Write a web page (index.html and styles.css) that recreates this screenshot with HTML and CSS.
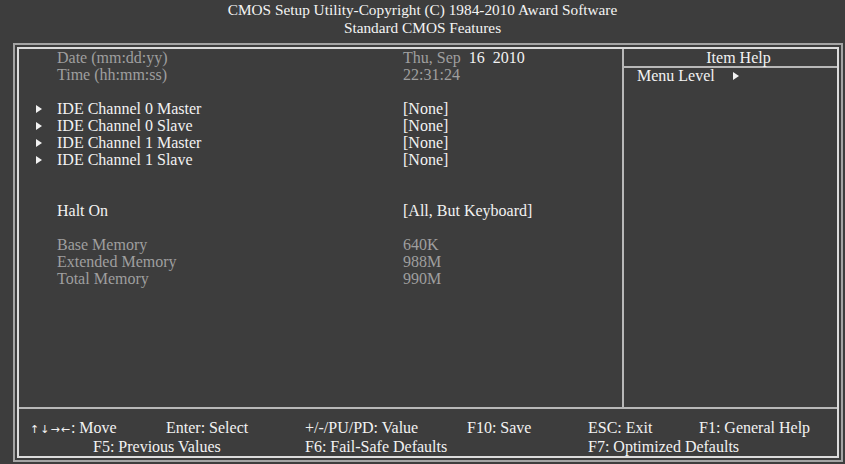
FILE: index.html
```html
<!DOCTYPE html>
<html lang="en">
<head>
  <meta charset="UTF-8">
  <meta name="viewport" content="width=device-width, initial-scale=1.0">
  <title>Standard CMOS Features</title>
  <link rel="stylesheet" href="styles.css">
</head>
<body>
  <!-- 상단 타이틀 -->
  <header class="title">
    <div>CMOS Setup Utility-Copyright (C) 1984-2010 Award Software</div>
    <div>Standard CMOS Features</div>
  </header>

  <div class="frame">
    <div class="inner">
      <div class="main">
        <!-- 설정 항목 목록 -->
        <div class="list">
          <div class="row dim"><span class="mark"></span><span>Date (mm:dd:yy)</span><span class="val">Thu, Sep  <b class="hi">16  2010</b></span></div>
          <div class="row dim"><span class="mark"></span><span>Time (hh:mm:ss)</span><span class="val">22:31:24</span></div>
          <div class="row"></div>
          <div class="row"><span class="mark"><i class="arrow"></i></span><span>IDE Channel 0 Master</span><span class="val">[None]</span></div>
          <div class="row"><span class="mark"><i class="arrow"></i></span><span>IDE Channel 0 Slave</span><span class="val">[None]</span></div>
          <div class="row"><span class="mark"><i class="arrow"></i></span><span>IDE Channel 1 Master</span><span class="val">[None]</span></div>
          <div class="row"><span class="mark"><i class="arrow"></i></span><span>IDE Channel 1 Slave</span><span class="val">[None]</span></div>
          <div class="row"></div>
          <div class="row"></div>
          <div class="row"><span class="mark"></span><span>Halt On</span><span class="val">[All, But Keyboard]</span></div>
          <div class="row"></div>
          <div class="row dim"><span class="mark"></span><span>Base Memory</span><span class="val">640K</span></div>
          <div class="row dim"><span class="mark"></span><span>Extended Memory</span><span class="val">988M</span></div>
          <div class="row dim"><span class="mark"></span><span>Total Memory</span><span class="val">990M</span></div>
        </div>

        <!-- 도움말 영역 -->
        <div class="help">
          <div class="help-title">Item Help</div>
          <div class="help-body">Menu Level <i class="arrow"></i></div>
        </div>
      </div>

      <!-- 하단 키 안내 -->
      <div class="keys">
        <div class="keys-row first">
          <span><span class="keys-arrows">&uarr;&darr;&rarr;&larr;</span>: Move</span>
          <span>Enter: Select</span>
          <span>+/-/PU/PD: Value</span>
          <span>F10: Save</span>
          <span>ESC: Exit</span>
          <span>F1: General Help</span>
        </div>
        <div class="keys-row second">
          <span>F5: Previous Values</span>
          <span>F6: Fail-Safe Defaults</span>
          <span>F7: Optimized Defaults</span>
        </div>
      </div>
    </div>
  </div>
</body>
</html>
```

FILE: styles.css
```css
/* 전체 바디 */
body {
  margin: 0;
  width: 845px;
  height: 464px;
  overflow: hidden;
  background-color: #3d3d3d;
  color: #f2f2f2;
  font-family: 'Liberation Serif', 'Times New Roman', serif;
  font-size: 16px;
}

.title {
  height: 43px;
  padding-top: 1px;
  box-sizing: border-box;
  text-align: center;
  font-size: 15.3px;
  line-height: 18px;
  color: #f4f4f4;
}

/* 바깥 회색 테두리 + 안쪽 흰 테두리 */
.frame {
  margin-left: 13px;
  width: 830px;
  height: 419px;
  box-sizing: border-box;
  border: 2px solid #a4a4a4;
  padding: 2px;
}

.inner {
  height: 100%;
  box-sizing: border-box;
  border: 2px solid #dcdcdc;
  display: flex;
  flex-direction: column;
}

.main {
  height: 358px;
  display: grid;
  grid-template-columns: 603px 1fr;
  border-bottom: 2px solid #b8b8b8;
}

.list {
  padding: 0 0 0 17px;
}

.row {
  height: 17px;
  line-height: 17px;
  display: grid;
  grid-template-columns: 21px 346px auto;
  white-space: pre;
}

.dim {
  color: #9f9f9f;
}

.hi {
  font-weight: normal;
  color: #f2f2f2;
}

.mark {
  display: flex;
  align-items: center;
}

.arrow {
  display: inline-block;
  width: 0;
  height: 0;
  border-top: 4.5px solid transparent;
  border-bottom: 4.5px solid transparent;
  border-left: 6px solid #f2f2f2;
}

.help {
  border-left: 2px solid #b8b8b8;
}

.help-title {
  height: 17px;
  line-height: 17px;
  text-align: center;
  padding-left: 16px;
  border-bottom: 2px solid #b8b8b8;
}

.help-body {
  padding-left: 13px;
  line-height: 16px;
}

.help-body .arrow {
  margin-left: 14px;
  vertical-align: 1px;
}

/* 키 안내 */
.keys {
  flex: 1;
  padding-top: 10px;
  line-height: 17px;
}

.keys-row {
  display: grid;
  white-space: nowrap;
}

.keys-arrows {
  font-family: 'DejaVu Sans', sans-serif;
  font-size: 11px;
  letter-spacing: 1px;
}

.keys-row.first {
  grid-template-columns: 136px 139px 162px 121px 111px auto;
  padding-left: 11px;
}

.keys-row.second {
  grid-template-columns: 212px 283px auto;
  padding-left: 74px;
}
```
